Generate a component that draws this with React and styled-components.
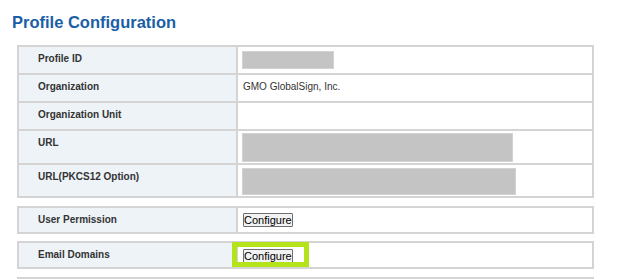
import React from "react";
import styled, { createGlobalStyle } from "styled-components";

const GlobalStyle = createGlobalStyle`
  body {
    margin: 0;
    background: #ffffff;
    font-family: "Liberation Sans", Arial, sans-serif;
  }
`;

const Page = styled.div`
  padding: 12px 0 0 12px;
  width: 624px;
  height: 279px;
  box-sizing: border-box;
  overflow: hidden;
`;

const Title = styled.h1`
  margin: 0 0 13px 0;
  font-size: 16.5px;
  line-height: 20px;
  font-weight: bold;
  color: #1b5ea6;
`;

const Grid = styled.div`
  display: grid;
  grid-template-columns: ${(p) => p.labelWidth || 217}px 1fr;
  gap: 2px;
  padding: 2px;
  background: #d4d4d4;
  width: 577px;
  box-sizing: border-box;
  margin: 0 0 ${(p) => p.gapBelow ?? 8}px 5px;
`;

const Label = styled.div`
  background: #eef3f8;
  height: ${(p) => p.h || 26}px;
  padding: 6px 0 0 19px;
  box-sizing: border-box;
  font-size: 10px;
  line-height: 12px;
  font-weight: bold;
  color: #333333;
`;

const Value = styled.div`
  background: #ffffff;
  height: ${(p) => p.h || 26}px;
  padding: ${(p) => p.pad || "6px 0 0 5px"};
  box-sizing: border-box;
  font-size: 10px;
  line-height: 12px;
  color: #333333;
`;

const Masked = styled.div`
  width: ${(p) => p.w}px;
  height: ${(p) => p.h}px;
  background: #c4c4c4;
  border: 1px solid #d2d2d2;
  box-sizing: border-box;
`;

const Spot = styled.span`
  position: relative;
  display: inline-block;
`;

const Highlight = styled.span`
  position: absolute;
  left: -11px;
  top: -7px;
  width: 77px;
  height: 25px;
  border: 5px solid #b4e31c;
  box-sizing: border-box;
  pointer-events: none;
`;

const ConfigureButton = styled.button`
  display: block;
  width: 50px;
  height: 14px;
  padding: 0;
  margin: 0;
  border: 1px solid #6f6f6f;
  border-radius: 1px;
  background: #f2f2f2;
  font-family: "Liberation Sans", Arial, sans-serif;
  font-size: 11px;
  line-height: 12px;
  color: #000000;
  white-space: nowrap;
  overflow: visible;
  text-align: left;
`;

export default function App() {
  return (
    <>
      <GlobalStyle />
      <Page>
        <Title>Profile Configuration</Title>

        <Grid>
          <Label>Profile ID</Label>
          <Value pad="4px 0 0 4px">
            <Masked w={92} h={18} />
          </Value>
          <Label>Organization</Label>
          <Value>GMO GlobalSign, Inc.</Value>
          <Label>Organization Unit</Label>
          <Value />
          <Label h={32}>URL</Label>
          <Value h={32} pad="2px 0 0 4px">
            <Masked w={271} h={29} />
          </Value>
          <Label h={31}>URL(PKCS12 Option)</Label>
          <Value h={31} pad="3px 0 0 4px">
            <Masked w={274} h={27} />
          </Value>
        </Grid>

        <Grid gapBelow={7}>
          <Label h={24}>User Permission</Label>
          <Value h={24} pad="5px 0 0 5px">
            <ConfigureButton>Configure</ConfigureButton>
          </Value>
        </Grid>

        <Grid>
          <Label h={24}>Email Domains</Label>
          <Value h={24} pad="6px 0 0 5px">
            <Spot>
              <ConfigureButton>Configure</ConfigureButton>
              <Highlight />
            </Spot>
          </Value>
        </Grid>

        <Grid labelWidth={203}>
          <Label h={24} />
          <Value h={24} />
        </Grid>
      </Page>
    </>
  );
}
